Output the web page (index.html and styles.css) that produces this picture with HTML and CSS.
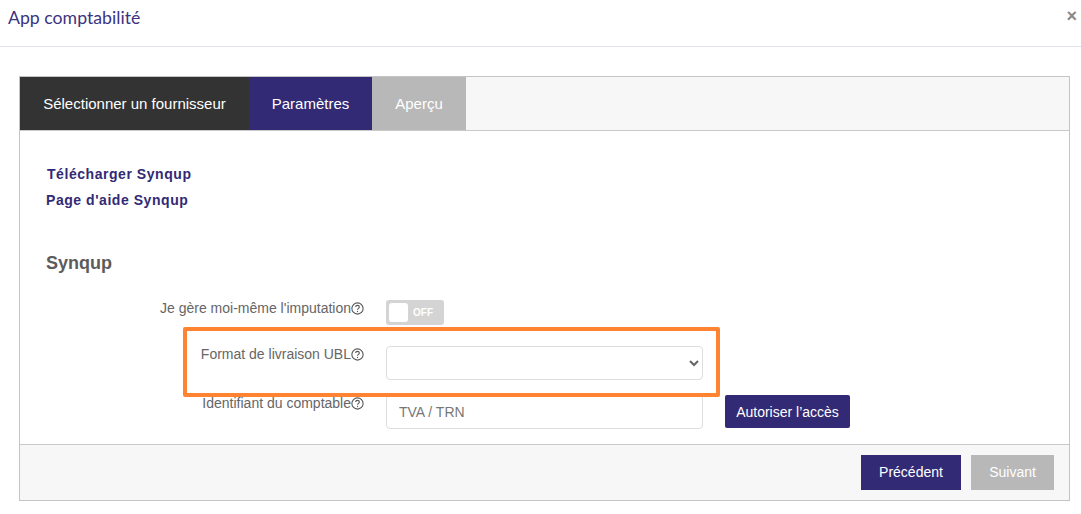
FILE: index.html
```html
<!DOCTYPE html>
<html lang="fr">
<head>
<meta charset="utf-8">
<title>App comptabilité</title>
<link rel="stylesheet" href="styles.css">
</head>
<body>
<header class="modal-header">
  <h1 class="modal-title">App comptabilité</h1>
  <span class="close">×</span>
</header>
<main class="modal-body">
  <section class="wizard">
    <nav class="tabs">
      <a class="tab tab-done">Sélectionner un fournisseur</a>
      <a class="tab tab-active">Paramètres</a>
      <a class="tab tab-todo">Aperçu</a>
    </nav>
    <div class="content">
      <a class="link link-first">Télécharger Synqup</a>
      <a class="link link-second">Page d'aide Synqup</a>
      <h2 class="section-title">Synqup</h2>
      <div class="row row-toggle">
        <label class="label">Je gère moi-même l'imputation<svg class="help" viewBox="0 0 12 12"><circle cx="6" cy="6" r="5.2"/><path d="M4.3 4.7c0-1 .8-1.6 1.7-1.6s1.7.6 1.7 1.5c0 1.3-1.7 1.3-1.7 2.6"/><path d="M6 8.2v1.1"/></svg></label>
        <div class="toggle"><span class="knob"></span><span class="off">OFF</span></div>
      </div>
      <div class="row row-select">
        <label class="label">Format de livraison UBL<svg class="help" viewBox="0 0 12 12"><circle cx="6" cy="6" r="5.2"/><path d="M4.3 4.7c0-1 .8-1.6 1.7-1.6s1.7.6 1.7 1.5c0 1.3-1.7 1.3-1.7 2.6"/><path d="M6 8.2v1.1"/></svg></label>
        <select class="field select"><option></option></select>
      </div>
      <div class="row row-input">
        <label class="label">Identifiant du comptable<svg class="help" viewBox="0 0 12 12"><circle cx="6" cy="6" r="5.2"/><path d="M4.3 4.7c0-1 .8-1.6 1.7-1.6s1.7.6 1.7 1.5c0 1.3-1.7 1.3-1.7 2.6"/><path d="M6 8.2v1.1"/></svg></label>
        <input class="field input" placeholder="TVA / TRN">
        <button class="btn-auth">Autoriser l’accès</button>
      </div>
    </div>
    <footer class="footer">
      <button class="btn btn-prev">Précédent</button>
      <button class="btn btn-next">Suivant</button>
    </footer>
  </section>
</main>
<div class="highlight"></div>
</body>
</html>
```
FILE: styles.css
```css
* { box-sizing: border-box; }
html, body { margin: 0; padding: 0; }
body {
  width: 1081px;
  height: 514px;
  overflow: hidden;
  background: #fff;
  font-family: "Liberation Sans", Arial, sans-serif;
  color: #666;
  position: relative;
}
.modal-header {
  height: 47px;
  border-bottom: 1px solid #e2e2ea;
  display: flex;
  justify-content: space-between;
  align-items: flex-start;
  padding: 7px 0 0 8px;
}
.modal-title {
  margin: 0;
  font: 400 17.7px/22px Lato, sans-serif;
  color: #3b3480;
}
.close {
  font: 700 18px/18px "Liberation Sans", sans-serif;
  color: #888;
  margin-right: 4px;
  margin-top: 0;
}
.modal-body { padding: 29px 11px 0 19px; }
.wizard {
  height: 425px;
  border: 1px solid #c4c4c4;
  display: flex;
  flex-direction: column;
}
.tabs {
  display: flex;
  height: 54px;
  flex: none;
  background: #f7f7f7;
  border-bottom: 1px solid #c9c9c9;
}
.tab {
  display: flex;
  align-items: center;
  justify-content: center;
  height: 53px;
  font-size: 15px;
  color: #fff;
}
.tab-done { width: 229px; background: #333; }
.tab-active { width: 123px; background: #322a75; }
.tab-todo { width: 94px; background: #b8b8b8; }
.content {
  flex: 1;
  padding: 0 0 0 26px;
  display: flex;
  flex-direction: column;
  min-height: 0;
}
.link {
  display: block;
  font-size: 14px;
  font-weight: 700;
  line-height: 18px;
  letter-spacing: 0.55px;
  color: #322a75;
}
.link-first { margin: 34px 0 0 1px; }
.link-second { margin-top: 8px; }
.section-title {
  margin: 43px 0 0;
  font-size: 18px;
  line-height: 22px;
  font-weight: 700;
  color: #5c5c5c;
}
.row { display: flex; }
.label {
  width: 318px;
  font-size: 14px;
  line-height: 16px;
  text-align: right;
  flex: none;
  color: #666;
  display: block;
}
.help {
  width: 13px;
  height: 13px;
  margin-left: 0;
  vertical-align: -2px;
  fill: none;
  stroke: #555;
  stroke-width: 1;
}
.row-toggle { margin-top: 26px; height: 25px; }
.row-select { margin-top: 21px; height: 34px; }
.row-input { margin-top: 15px; height: 34px; }
.toggle {
  margin-left: 22px;
  width: 58px;
  height: 25px;
  border-radius: 3px;
  background: #d4d4d4;
  padding: 3px;
  display: flex;
  align-items: center;
}
.knob { width: 19px; height: 19px; background: #fff; border-radius: 3px; }
.off { margin-left: 5px; font-size: 10px; font-weight: 700; color: #fff; }
.field {
  margin-left: 22px;
  width: 317px;
  height: 34px;
  border: 1px solid #dedede;
  border-radius: 4px;
  background: #fff;
  font: 14px "Liberation Sans", sans-serif;
  color: #666;
}
.input { padding: 0 12px; }
.input::placeholder { color: #777; opacity: 1; }
.btn-auth {
  margin-left: 22px;
  width: 125px;
  height: 33px;
  background: #322a75;
  color: #fff;
  border: 0;
  border-radius: 2px;
  font: 14px "Liberation Sans", sans-serif;
  padding: 0;
}
.footer {
  flex: none;
  height: 56px;
  background: #f7f7f7;
  border-top: 1px solid #c9c9c9;
  display: flex;
  justify-content: flex-end;
  gap: 10px;
  padding: 10px 15px 0 0;
}
.btn {
  height: 35px;
  border: 0;
  color: #fff;
  font: 14px "Liberation Sans", sans-serif;
  padding: 0 0 2px;
}
.btn-prev { width: 100px; background: #322a75; }
.btn-next { width: 83px; background: #b8b8b8; }
.highlight {
  position: absolute;
  left: 183px;
  top: 327px;
  width: 537px;
  height: 70px;
  border: 4px solid #ff8330;
  border-radius: 2px;
}
```
